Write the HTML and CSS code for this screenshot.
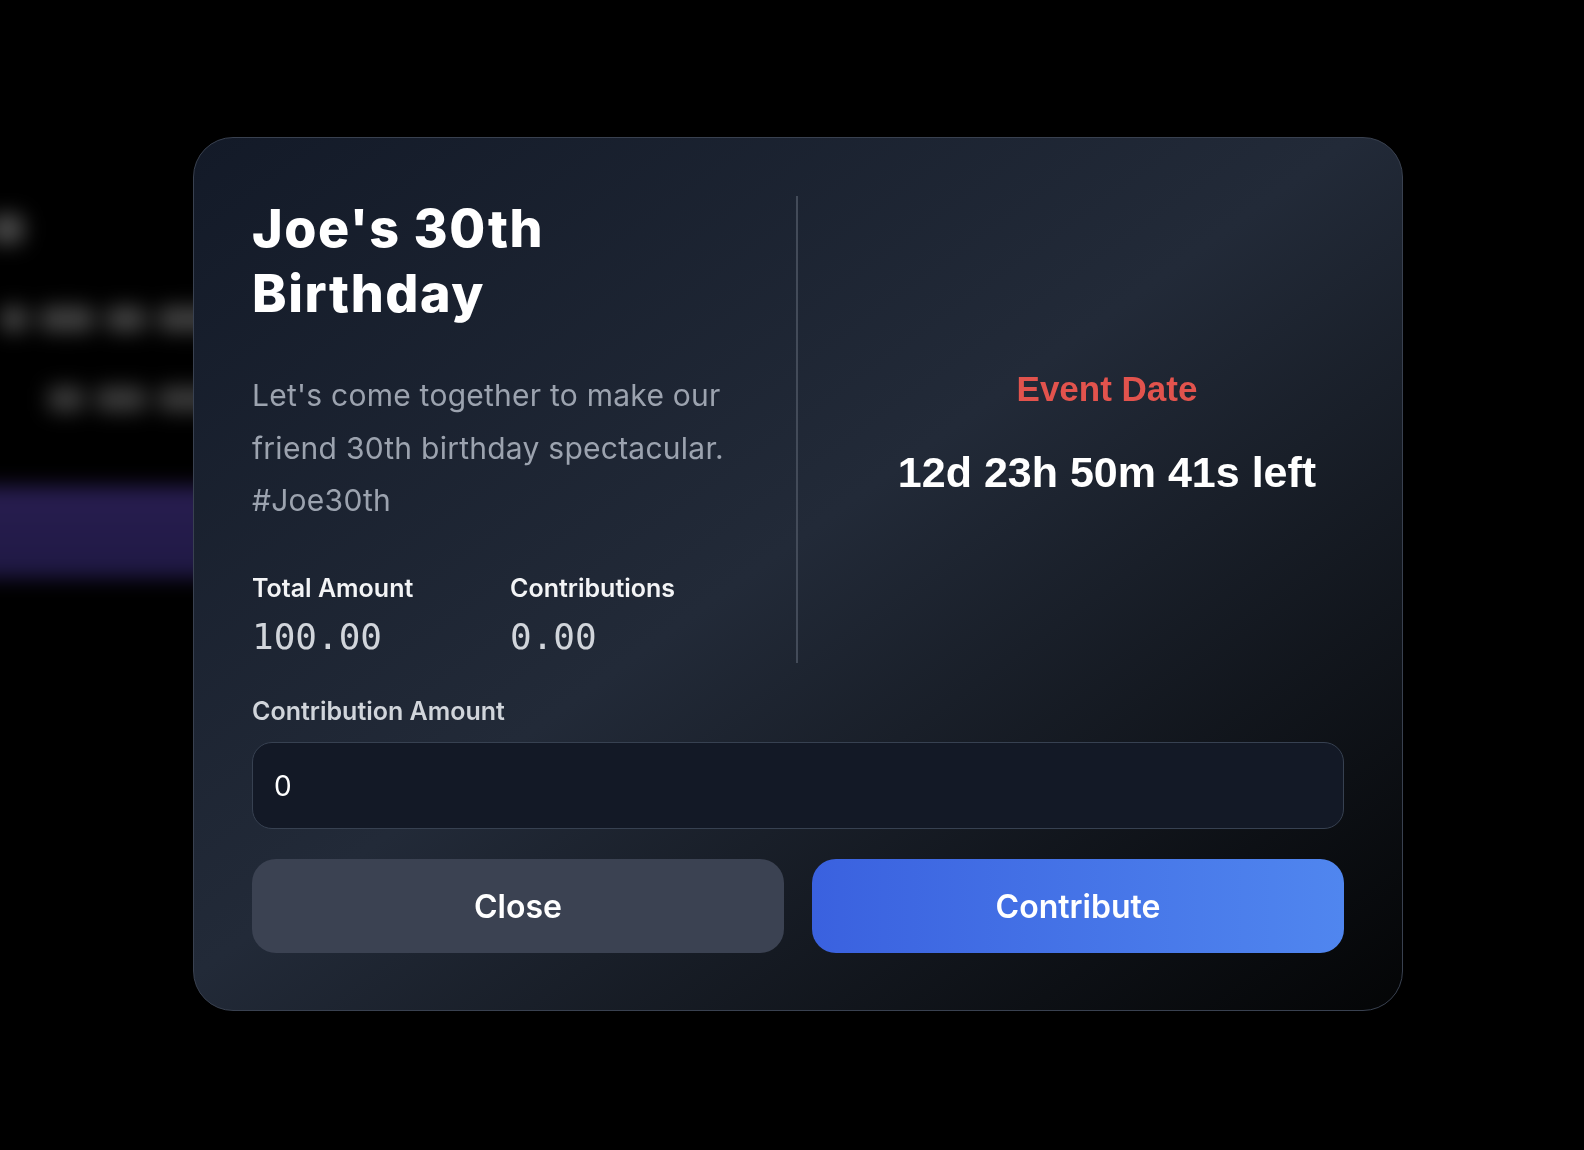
FILE: index.html
```html
<!DOCTYPE html>
<html lang="en">
<head>
<meta charset="utf-8">
<title>Joe's 30th Birthday</title>
<link rel="stylesheet" href="styles.css">
</head>
<body>
<div class="backdrop" aria-hidden="true">
  <div class="bd-head"></div>
  <div class="bd-row bd-row1">
    <span class="bd-chip w28"></span><span class="bd-chip w54"></span><span class="bd-chip w40"></span><span class="bd-chip w60"></span>
  </div>
  <div class="bd-row bd-row2">
    <span class="bd-chip w36"></span><span class="bd-chip w50"></span><span class="bd-chip w60"></span>
  </div>
  <div class="bd-bar"></div>
</div>

<div class="overlay">
  <div class="modal">
    <div class="top">
      <div class="info">
        <h1 class="title">Joe's 30th Birthday</h1>
        <p class="desc">Let's come together to make our friend 30th birthday spectacular. #Joe30th</p>
        <div class="stats">
          <div class="stat">
            <div class="stat-label">Total Amount</div>
            <div class="stat-value">100.00</div>
          </div>
          <div class="stat">
            <div class="stat-label">Contributions</div>
            <div class="stat-value">0.00</div>
          </div>
        </div>
      </div>
      <div class="event">
        <div class="event-label">Event Date</div>
        <div class="event-count">12d 23h 50m 41s left</div>
      </div>
    </div>
    <label class="field-label" for="amount">Contribution Amount</label>
    <input id="amount" class="field" type="text" value="0">
    <div class="actions">
      <button class="btn btn-close">Close</button>
      <button class="btn btn-primary">Contribute</button>
    </div>
  </div>
</div>
</body>
</html>
```

FILE: styles.css
```css
* { box-sizing: border-box; }

html, body {
  margin: 0;
  padding: 0;
  width: 1584px;
  height: 1150px;
  overflow: hidden;
  background: #000;
  font-family: "Inter", "Noto Sans", sans-serif;
}

/* blurred page behind the dialog */
.backdrop {
  filter: blur(10px);
  padding-top: 214px;
}
.bd-head {
  width: 34px;
  height: 30px;
  margin-left: -10px;
  border-radius: 8px;
  background: #474747;
}
.bd-row {
  display: flex;
  gap: 12px;
}
.bd-row1 { margin-top: 62px; }
.bd-row2 { margin-top: 54px; margin-left: 48px; }
.bd-chip {
  display: block;
  height: 26px;
  border-radius: 6px;
  background: #404040;
}
.w28 { width: 28px; }
.w54 { width: 54px; }
.w40 { width: 40px; }
.w60 { width: 60px; }
.w36 { width: 36px; }
.w50 { width: 50px; }
.bd-row2 .bd-chip { background: #3a3a3a; }
.bd-bar {
  margin-top: 74px;
  margin-left: -30px;
  width: 290px;
  height: 92px;
  background: linear-gradient(to bottom, #281d50, #1f1944);
}

/* dialog overlay */
.overlay {
  position: fixed;
  inset: 0;
  display: flex;
  align-items: center;
  justify-content: center;
  padding-left: 12px;
  padding-bottom: 2px;
}

.modal {
  width: 1210px;
  height: 874px;
  border: 1px solid #394150;
  border-radius: 40px;
  padding: 58px 58px 56px;
  background: linear-gradient(to bottom right, #131a28 0%, #222a38 48%, #040506 100%);
  display: flex;
  flex-direction: column;
}

.top {
  display: grid;
  grid-template-columns: 546px 1fr;
  height: 467px;
}

.info {
  border-right: 2px solid #434b59;
  padding-right: 60px;
}

.title {
  margin: 0;
  font-size: 52px;
  line-height: 65px;
  font-weight: 800;
  letter-spacing: 1.6px;
  color: #fff;
}

.desc {
  margin: 43px 0 0;
  font-size: 30px;
  line-height: 52.5px;
  letter-spacing: 0.25px;
  color: #9ca3af;
}

.stats {
  margin-top: 45px;
  display: grid;
  grid-template-columns: 1fr 1fr;
  column-gap: 32px;
}
.stat-label {
  font-size: 25px;
  line-height: 32px;
  font-weight: 600;
  color: #f3f4f6;
}
.stat-value {
  margin-top: 13px;
  font-family: "DejaVu Sans Mono", "Liberation Mono", monospace;
  font-size: 36px;
  line-height: 40px;
  color: #d1d5db;
}

.event {
  padding-left: 72px;
  padding-top: 6px;
  display: flex;
  flex-direction: column;
  align-items: center;
  justify-content: center;
  font-family: "Liberation Sans", Arial, sans-serif;
  font-weight: 700;
}
.event-label {
  font-size: 35px;
  line-height: 40px;
  color: #e2534d;
}
.event-count {
  margin-top: 38px;
  font-size: 43px;
  line-height: 50px;
  color: #fff;
}

.field-label {
  display: block;
  margin-top: 32px;
  font-size: 25px;
  line-height: 32px;
  font-weight: 600;
  color: #d1d5db;
}

.field {
  margin-top: 15px;
  width: 100%;
  height: 87px;
  border: 1px solid #374151;
  border-radius: 20px;
  background: #131926;
  padding: 0 21px;
  font-family: "Inter", sans-serif;
  font-size: 28px;
  color: #fff;
  outline: none;
}

.actions {
  margin-top: 30px;
  display: grid;
  grid-template-columns: 1fr 1fr;
  column-gap: 28px;
}

.btn {
  height: 94px;
  border: 0;
  border-radius: 24px;
  font-family: "Inter", sans-serif;
  font-size: 32px;
  font-weight: 600;
  color: #fff;
  cursor: pointer;
}
.btn-close { background: #3b4252; }
.btn-primary { background: linear-gradient(to right, #3a61df, #5086ef); }
```
